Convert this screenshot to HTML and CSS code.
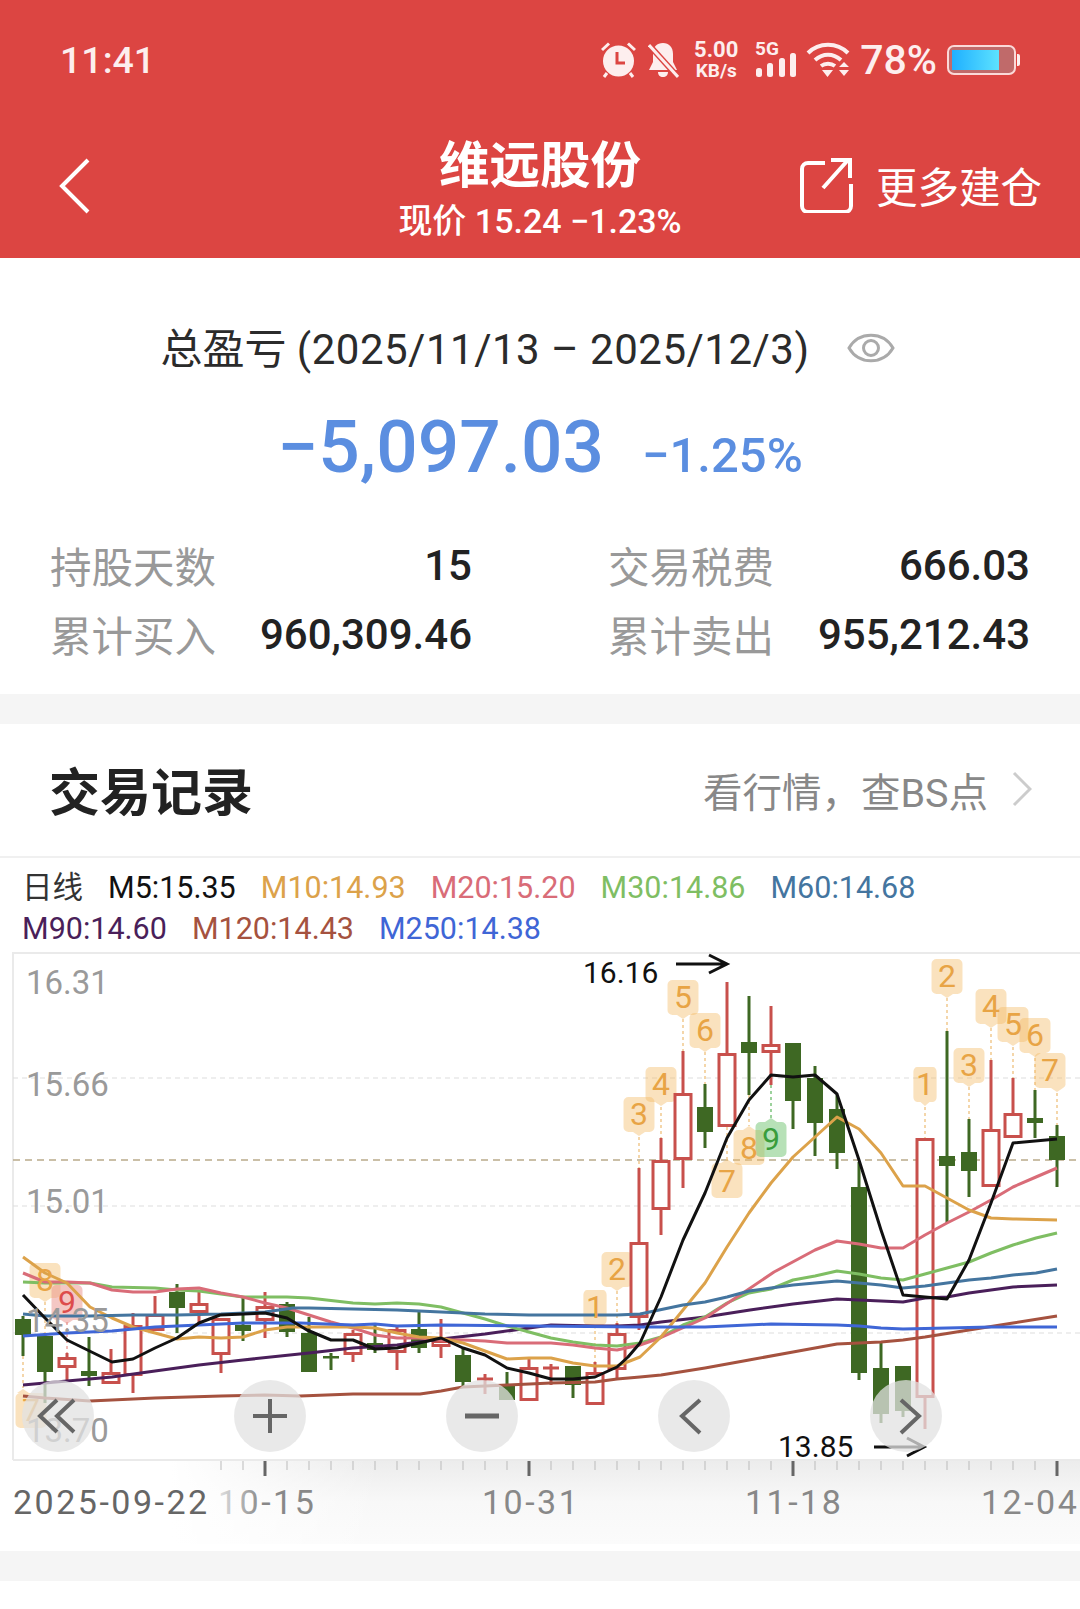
FILE: index.html
```html
<!DOCTYPE html>
<html lang="zh-CN">
<head>
    <meta charset="UTF-8">
    <meta name="viewport" content="width=device-width, initial-scale=1.0">
    <title>维远股份</title>
    <link rel="stylesheet" href="styles.css">
</head>
<body>
    <header class="top">
        <div class="status-bar">
            <span class="time">11:41</span>
            <div class="status-icons">
                <svg class="icon-alarm" width="35" height="36" viewBox="0 0 35 36">
                    <circle cx="17.5" cy="19" r="15.5" fill="#fdeeee"/>
                    <path d="M1 8 8 1.500M34 8 27 1.500M6 31l-3 4M29 31l3 4" stroke="#fdeeee" stroke-width="3" fill="none"/>
                    <path d="M16 10v11h8" stroke="#dc4542" stroke-width="3" fill="none"/>
                </svg>
                <svg class="icon-bell" width="31" height="36" viewBox="0 0 31 36">
                    <path d="M15 1c6 0 10 4 10 11v8l4 8H1l4-8v-9C5 5 9 1 15 1ZM10 30h10c0 3-2 5-5 5s-5-2-5-5Z" fill="#fdeeee"/>
                    <path d="M1 3 30 35" stroke="#dc4542" stroke-width="6"/>
                    <path d="M1 3 30 35" stroke="#fdeeee" stroke-width="3"/>
                </svg>
                <div class="net-speed"><span>5.00</span><span class="net-unit">KB/s</span></div>
                <svg class="icon-signal" width="42" height="42" viewBox="0 -6 42 42">
                    <text class="signal-label" x="0" y="13">5G</text>
                    <rect x="1" y="26" width="6" height="9" rx="2.5"/>
                    <rect x="12" y="21" width="6" height="14" rx="2.5"/>
                    <rect x="24" y="16" width="6" height="19" rx="2.5"/>
                    <rect x="35" y="11" width="6" height="24" rx="2.5"/>
                </svg>
                <svg class="icon-wifi" width="44" height="36" viewBox="0 0 44 36">
                    <path d="M2 11C13 0 31 0 42 11M9 18c8-7 18-7 26 0M15 24c4-3 10-3 14 0" stroke="#fdeeee" stroke-width="4" fill="none"/>
                    <path d="M16 28h11l-5.500 7ZM33 25l5-5 5 5ZM33 28h10l-5 6Z" fill="#fdeeee"/>
                </svg>
                <span class="battery-level">78%</span>
                <div class="battery"><div class="battery-fill"></div></div>
            </div>
        </div>
        <nav class="nav">
            <svg class="nav-back" width="32" height="56" viewBox="0 0 32 56">
                <path d="M29 2 3 28l26 26" stroke="#fff" stroke-width="4" fill="none"/>
            </svg>
            <div class="nav-title">
                <h1>维远股份</h1>
                <p>现价 15.24 −1.23%</p>
            </div>
            <div class="nav-action">
                <svg width="54" height="56" viewBox="0 0 54 56">
                    <path d="M26 6H9a6 6 0 0 0-6 6v37a6 6 0 0 0 6 6h37a6 6 0 0 0 6-6V27" stroke="#fff" stroke-width="4" fill="none"/>
                    <path d="M24 31 49 3M32 3h19v18" stroke="#fff" stroke-width="4" fill="none"/>
                </svg>
                <span>更多建仓</span>
            </div>
        </nav>
    </header>

    <section class="summary">
        <div class="summary-label">
            <span class="summary-text">总盈亏 <span class="summary-range">(2025/11/13 – 2025/12/3)</span></span>
            <svg width="48" height="32" viewBox="0 0 48 32">
                <path d="M2 16C12 -1 36 -1 46 16 36 33 12 33 2 16Z" stroke="#aaa" stroke-width="3" fill="none"/>
                <circle cx="24" cy="16" r="7.500" stroke="#aaa" stroke-width="3" fill="none"/>
            </svg>
        </div>
        <div class="summary-total">
            <span class="total-amount">−5,097.03</span>
            <span class="total-rate">−1.25%</span>
        </div>
        <dl class="stats">
            <div class="stat"><dt>持股天数</dt><dd>15</dd></div>
            <div class="stat"><dt>交易税费</dt><dd>666.03</dd></div>
            <div class="stat"><dt>累计买入</dt><dd>960,309.46</dd></div>
            <div class="stat"><dt>累计卖出</dt><dd>955,212.43</dd></div>
        </dl>
    </section>

    <div class="band"></div>

    <section class="records">
        <div class="records-head">
            <h2>交易记录</h2>
            <div class="records-link">
                <span>看行情，查BS点</span>
                <svg width="20" height="36" viewBox="0 0 20 36">
                    <path d="M2 2 18 18 2 34" stroke="#ccc" stroke-width="3" fill="none"/>
                </svg>
            </div>
        </div>

        <div class="legend">
            <span class="legend-period">日线</span>
            <span class="ma5">M5:15.35</span>
            <span class="ma10">M10:14.93</span>
            <span class="ma20">M20:15.20</span>
            <span class="ma30">M30:14.86</span>
            <span class="ma60">M60:14.68</span>
            <span class="ma90">M90:14.60</span>
            <span class="ma120">M120:14.43</span>
            <span class="ma250">M250:14.38</span>
        </div>

        <div class="chart">
            <svg class="chart-svg" width="1080" height="598" viewBox="0 946 1080 598">
                <defs>
                    <linearGradient id="axisShade" x1="0" y1="0" x2="0" y2="1">
                        <stop offset="0" stop-color="#ececec"/>
                        <stop offset="0.5" stop-color="#f8f8f8"/>
                        <stop offset="1" stop-color="#fbfbfb"/>
                    </linearGradient>
                    <linearGradient id="axisFade" x1="0" y1="0" x2="1" y2="0">
                        <stop offset="0" stop-color="#fff"/>
                        <stop offset="0.45" stop-color="#fff"/>
                        <stop offset="1" stop-color="#fff" stop-opacity="0"/>
                    </linearGradient>
                    <linearGradient id="labelFade" gradientUnits="userSpaceOnUse" x1="220" y1="0" x2="262" y2="0">
                        <stop offset="0" stop-color="#ddd"/>
                        <stop offset="1" stop-color="#888"/>
                    </linearGradient>
                    <path id="tipDown" d="M-10.500 0H10.500A5 5 0 0 1 15.500 5V30A5 5 0 0 1 10.500 35H6L0 39L-6 35H-10.500A5 5 0 0 1-15.500 30V5A5 5 0 0 1-10.500 0Z"/>
                    <path id="tipUp" d="M-10.500 0H-6L0-4 6 0H10.500A5 5 0 0 1 15.500 5V30A5 5 0 0 1 10.500 35H-10.500A5 5 0 0 1-15.500 30V5A5 5 0 0 1-10.500 0Z"/>
                    <path id="tipDownRight" d="M-10.500 0H10.500A5 5 0 0 1 15.500 5V30A5 5 0 0 1 13 35L7 39L1 35H-10.500A5 5 0 0 1-15.500 30V5A5 5 0 0 1-10.500 0Z"/>
                    <path id="tipUpLeft" d="M-10.500 0H-14L-8-4 -2 0H10.500A5 5 0 0 1 15.500 5V30A5 5 0 0 1 10.500 35H-10.500A5 5 0 0 1-15.500 30V5A5 5 0 0 1-10.500 0Z"/>
                </defs>

                <!-- axis strip -->
                <rect x="0" y="1460" width="1080" height="84" fill="url(#axisShade)"/>
                <rect x="0" y="1460" width="380" height="84" fill="url(#axisFade)"/>

                <!-- frame and price lines -->
                <path class="frame" d="M13 1460V953H1080M13 1460H1080"/>
                <path class="grid" d="M13 1078H1080M13 1206H1080M13 1333H1080"/>
                <path class="last-price" d="M13 1160H1080"/>

                <!-- marker stems -->
                <path class="stem" d="M595 1331V1372M617 1291V1323M639 1137V1168M661 1107V1138M683 1019V1051M705 1052V1084M727 1127V1160M749 1095V1126M925 1107V1138M947 998V1031M969 1087V1119M991 1028V1060M1013 1047V1078M1035 1058V1090M1057 1093V1125M45 1302V1333M23 1356V1388"/>
                <path class="stem stem-red" d="M67 1322V1353"/>
                <path class="stem stem-green" d="M771 1085V1118"/>

                <!-- markers -->
                <g class="marks">
                    <use href="#tipDown" transform="translate(595 1290) scale(.75 1)"/>
                    <use href="#tipDown" transform="translate(617 1252)"/>
                    <use href="#tipDown" transform="translate(639 1097)"/>
                    <use href="#tipDown" transform="translate(661 1067)"/>
                    <use href="#tipDown" transform="translate(683 980)"/>
                    <use href="#tipDown" transform="translate(705 1013)"/>
                    <use href="#tipUp" transform="translate(727 1163)"/>
                    <use href="#tipUp" transform="translate(749 1130)"/>
                    <use href="#tipDown" transform="translate(925 1067) scale(.75 1)"/>
                    <use href="#tipDown" transform="translate(947 959)"/>
                    <use href="#tipDown" transform="translate(969 1048)"/>
                    <use href="#tipDown" transform="translate(991 989)"/>
                    <use href="#tipDown" transform="translate(1013 1007)"/>
                    <use href="#tipDown" transform="translate(1035 1018)"/>
                    <use href="#tipDownRight" transform="translate(1050 1053)"/>
                    <use href="#tipDown" transform="translate(45 1263)"/>
                    <use href="#tipUpLeft" transform="translate(31 1393)"/>
                </g>
                <use class="mark-red" href="#tipDown" transform="translate(67 1285)"/>
                <use class="mark-green" href="#tipUp" transform="translate(771 1122)"/>

                <!-- candles -->
                <path class="wick-green" d="M23 1316V1356M45 1333V1403M89 1337V1386M177 1284V1333M243 1298V1341M287 1302V1337M309 1317V1372M331 1353V1370M375 1323V1353M419 1312V1353M463 1348V1388M507 1372V1400M573 1366V1398M705 1084V1148M749 996V1095M793 1043V1129M815 1066V1156M837 1095V1169M859 1162V1380M881 1343V1423M903 1366V1417M947 1031V1223M969 1119V1197M1035 1090V1138M1057 1125V1187"/>
                <path class="wick-red" d="M67 1353V1380M111 1349V1384M133 1313V1393M155 1296V1331M199 1292V1323M221 1318V1373M265 1292V1338M353 1330V1362M397 1327V1370M441 1319V1358M485 1374V1394M529 1357V1401M551 1364V1385M595 1362V1405M617 1323V1378M639 1168V1330M661 1138V1235M683 1051V1188M727 982V1127M771 1006V1085M925 1138V1429M991 1060V1187M1013 1078V1138"/>
                <g class="body-green">
                    <rect x="15" y="1319" width="16" height="16"/>
                    <rect x="37" y="1336" width="16" height="36"/>
                    <rect x="81" y="1371" width="16" height="5"/>
                    <rect x="169" y="1292" width="16" height="16"/>
                    <rect x="235" y="1325" width="16" height="6"/>
                    <rect x="279" y="1304" width="16" height="28"/>
                    <rect x="301" y="1333" width="16" height="39"/>
                    <rect x="323" y="1356" width="16" height="2.500"/>
                    <rect x="367" y="1343" width="16" height="7"/>
                    <rect x="411" y="1329" width="16" height="19"/>
                    <rect x="455" y="1355" width="16" height="27"/>
                    <rect x="499" y="1385" width="16" height="15"/>
                    <rect x="565" y="1366" width="16" height="19"/>
                    <rect x="697" y="1107" width="16" height="25"/>
                    <rect x="741" y="1042" width="16" height="11"/>
                    <rect x="785" y="1043" width="16" height="58"/>
                    <rect x="807" y="1078" width="16" height="45"/>
                    <rect x="829" y="1109" width="16" height="44"/>
                    <rect x="851" y="1187" width="16" height="186"/>
                    <rect x="873" y="1368" width="16" height="46"/>
                    <rect x="895" y="1366" width="16" height="45"/>
                    <rect x="939" y="1156" width="16" height="10"/>
                    <rect x="961" y="1152" width="16" height="19"/>
                    <rect x="1027" y="1118" width="16" height="5"/>
                    <rect x="1049" y="1136" width="16" height="24"/>
                </g>
                <g class="body-red">
                    <rect x="59" y="1358.500" width="16" height="8"/>
                    <rect x="103" y="1373.500" width="16" height="9"/>
                    <rect x="125" y="1326.500" width="16" height="48"/>
                    <rect x="147" y="1315.500" width="16" height="14"/>
                    <rect x="191" y="1304.500" width="16" height="7"/>
                    <rect x="213" y="1319.500" width="16" height="34"/>
                    <rect x="257" y="1307.500" width="16" height="12"/>
                    <rect x="345" y="1334.500" width="16" height="19"/>
                    <rect x="389" y="1330.500" width="16" height="21"/>
                    <rect x="433" y="1341.500" width="16" height="4"/>
                    <rect x="521" y="1368.500" width="16" height="31"/>
                    <rect x="587" y="1373.500" width="16" height="30"/>
                    <rect x="609" y="1334.500" width="16" height="34"/>
                    <rect x="631" y="1243.500" width="16" height="73"/>
                    <rect x="653" y="1161.500" width="16" height="47"/>
                    <rect x="675" y="1094.500" width="16" height="64"/>
                    <rect x="719" y="1054.500" width="16" height="71"/>
                    <rect x="763" y="1045.500" width="16" height="6"/>
                    <rect x="917" y="1139.500" width="16" height="257"/>
                    <rect x="983" y="1130.500" width="16" height="55"/>
                    <rect x="1005" y="1114.500" width="16" height="22"/>
                </g>
                <path class="cross-red" d="M477 1379H493M543 1368H559"/>

                <!-- moving averages -->
                <path class="ma ma-120-line" d="M23 1396L45 1398L90 1401L155 1398L221 1396L265 1395L300 1396L353 1394L420 1394L441 1391L463 1387L507 1385L551 1383L595 1382L617 1379L640 1377L661 1375L705 1368L749 1360L793 1352L837 1344L881 1342L903 1340L925 1337L969 1330L1013 1323L1057 1316"/>
                <path class="ma ma-90-line" d="M23 1385L67 1381L112 1377L155 1371L199 1365L243 1360L309 1353L353 1348L397 1345L441 1339L485 1334L529 1328L551 1325L595 1326L617 1326L640 1325L661 1322L705 1317L750 1310L793 1304L837 1299L881 1301L903 1302L925 1298L947 1297L969 1293L1013 1287L1057 1285"/>
                <path class="ma ma-30-line" d="M23 1282L45 1283L90 1283L112 1287L155 1288L177 1290L199 1291L221 1294L243 1297L287 1297L309 1298L353 1303L375 1304L397 1303L419 1304L441 1307L463 1313L485 1319L507 1326L529 1332L551 1338L573 1342L595 1345L617 1346L640 1343L661 1337L683 1325L705 1317L727 1303L749 1293L771 1289L793 1280L815 1276L837 1271L859 1274L881 1278L903 1280L925 1274L947 1268L969 1262L991 1253L1013 1245L1036 1238L1057 1233"/>
                <path class="ma ma-20-line" d="M23 1273L45 1282L67 1282L90 1283L112 1290L133 1292L155 1292L177 1289L199 1288L221 1293L243 1297L265 1303L287 1308L309 1315L331 1322L353 1328L375 1335L397 1338L419 1338L441 1340L463 1340L485 1341L507 1343L551 1343L573 1345L595 1348L617 1350L640 1345L660 1338L705 1318L740 1295L774 1272L815 1250L837 1241L859 1244L881 1248L903 1248L925 1235L947 1223L969 1212L991 1200L1013 1187L1036 1177L1057 1168"/>
                <path class="ma ma-10-line" d="M23 1257L45 1273L67 1283L90 1307L112 1318L133 1327L155 1333L177 1339L199 1337L221 1338L243 1337L265 1330L287 1327L309 1327L353 1327L375 1328L397 1333L419 1337L441 1338L463 1343L485 1351L507 1359L529 1358L551 1358L573 1363L595 1366L617 1366L640 1357L661 1337L683 1310L705 1283L727 1247L749 1213L771 1183L793 1157L815 1137L837 1117L859 1129L881 1153L903 1186L925 1186L947 1198L969 1210L991 1218L1013 1219L1057 1220"/>
                <path class="ma ma-60-line" d="M23 1314L45 1316L90 1316L133 1315L177 1315L221 1314L265 1312L293 1308L309 1308L353 1309L397 1310L441 1312L485 1314L529 1315L595 1315L617 1315L640 1314L683 1305L705 1302L727 1297L749 1291L771 1288L793 1285L815 1283L837 1281L859 1283L881 1285L903 1288L925 1286L947 1283L969 1280L991 1278L1013 1275L1036 1273L1057 1269"/>
                <path class="ma ma-250-line" d="M23 1336L67 1333L112 1331L155 1327L199 1325L243 1323L300 1323L353 1325L375 1324L397 1326L441 1325L640 1327L705 1327L771 1324L837 1325L859 1326L881 1328L903 1329L947 1328L991 1327L1057 1327"/>
                <path class="ma ma-5-line" d="M23 1295L45 1318L67 1340L112 1362L133 1359L155 1348L177 1338L199 1323L220 1315L265 1313L287 1318L307 1330L331 1340L353 1340L375 1349L397 1348L419 1343L441 1338L463 1348L485 1355L507 1368L529 1373L551 1379L573 1379L595 1377L617 1367L628 1357L640 1343L661 1297L683 1240L705 1193L727 1138L749 1100L771 1075L793 1077L815 1075L837 1094L859 1160L881 1230L903 1295L925 1297L947 1299L969 1260L991 1203L1013 1143L1057 1139"/>

                <!-- marker digits -->
                <g class="mark-text">
                    <text x="595" y="1318">1</text>
                    <text x="617" y="1280">2</text>
                    <text x="639" y="1125">3</text>
                    <text x="661" y="1095">4</text>
                    <text x="683" y="1008">5</text>
                    <text x="705" y="1041">6</text>
                    <text x="727" y="1192">7</text>
                    <text x="749" y="1159">8</text>
                    <text x="925" y="1095">1</text>
                    <text x="947" y="987">2</text>
                    <text x="969" y="1076">3</text>
                    <text x="991" y="1017">4</text>
                    <text x="1013" y="1035">5</text>
                    <text x="1035" y="1046">6</text>
                    <text x="1050" y="1081">7</text>
                    <text x="45" y="1291">8</text>
                    <text x="31" y="1421">7</text>
                </g>
                <text class="mark-text mark-text-red" x="67" y="1313">9</text>
                <text class="mark-text mark-text-green" x="771" y="1150">9</text>

                <!-- price scale -->
                <g class="price-label">
                    <text x="26" y="994">16.31</text>
                    <text x="26" y="1096">15.66</text>
                    <text x="26" y="1213">15.01</text>
                    <text x="26" y="1332">14.35</text>
                    <text x="26" y="1442">13.70</text>
                </g>

                <!-- high and low -->
                <text class="extreme" x="583" y="983">16.16</text>
                <path class="extreme-arrow" d="M676 964H727M709 955 727 964 709 973"/>
                <text class="extreme" x="778" y="1457">13.85</text>
                <path class="extreme-arrow" d="M874 1447H924M907 1438 924 1447 907 1456"/>

                <!-- time axis -->
                <path class="tick" d="M221 1461V1470M243 1461V1470M287 1461V1470M309 1461V1470M331 1461V1470M353 1461V1470M375 1461V1470M397 1461V1470M419 1461V1470M441 1461V1470M463 1461V1470M485 1461V1470M507 1461V1470M551 1461V1470M573 1461V1470M595 1461V1470M617 1461V1470M639 1461V1470M661 1461V1470M683 1461V1470M705 1461V1470M727 1461V1470M749 1461V1470M771 1461V1470M815 1461V1470M837 1461V1470M859 1461V1470M881 1461V1470M903 1461V1470M925 1461V1470M947 1461V1470M969 1461V1470M991 1461V1470M1013 1461V1470M1035 1461V1470"/>
                <path class="tick-major" d="M265 1461V1476M529 1461V1476M793 1461V1476M1057 1461V1476"/>
                <g class="date-label">
                    <text class="date-first" x="13" y="1514">2025-09-22</text>
                    <text class="date-faded" x="218" y="1514">10-15</text>
                    <text x="482" y="1514">10-31</text>
                    <text x="745" y="1514">11-18</text>
                    <text x="981" y="1514">12-04</text>
                </g>
            </svg>

            <div class="chart-buttons">
                <div class="chart-button">
                    <svg width="72" height="72" viewBox="0 0 72 72"><path d="M35 20 18 36l17 16M52 20 35 36l17 16"/></svg>
                </div>
                <div class="chart-button">
                    <svg width="72" height="72" viewBox="0 0 72 72"><path d="M19 36H53M36 19V53"/></svg>
                </div>
                <div class="chart-button">
                    <svg width="72" height="72" viewBox="0 0 72 72"><path class="thick" d="M19 36H53"/></svg>
                </div>
                <div class="chart-button">
                    <svg width="72" height="72" viewBox="0 0 72 72"><path d="M42 20 24 36l18 17"/></svg>
                </div>
                <div class="chart-button">
                    <svg width="72" height="72" viewBox="0 0 72 72"><path d="M31 20 49 36 31 53"/></svg>
                </div>
            </div>
        </div>
    </section>

    <div class="band band-bottom"></div>
</body>
</html>
```

FILE: styles.css
```css
* {
    box-sizing: border-box;
}

body {
    margin: 0;
    width: 1080px;
    height: 1609px;
    overflow: hidden;
    background-color: #fff;
    font-family: Roboto, "Noto Sans CJK SC", sans-serif;
    color: #222;
}

h1, h2, p, dl, dd {
    margin: 0;
}

/* red header */
.top {
    height: 258px;
    background-color: #dc4542;
    color: #fff;
}

.status-bar {
    height: 120px;
    padding: 0 64px 0 60px;
    display: flex;
    align-items: center;
    justify-content: space-between;
}

.time {
    font-size: 37.500px;
    font-weight: 500;
    color: #fdeeee;
}

.status-icons {
    display: flex;
    align-items: center;
}

.icon-bell {
    margin-left: 12px;
}

.net-speed {
    margin-left: 14px;
    width: 46px;
    display: flex;
    flex-direction: column;
    align-items: center;
    font-size: 22px;
    line-height: 21px;
    font-weight: 700;
    color: #fdeeee;
}

.net-unit {
    font-size: 19px;
}

.icon-signal {
    margin: -6px 0 0 16px;
}

.icon-signal rect {
    fill: #fdeeee;
}

.signal-label {
    font-size: 19px;
    font-weight: 700;
    fill: #fdeeee;
}

.icon-wifi {
    margin-left: 9px;
}

.battery-level {
    margin-left: 10px;
    font-size: 41px;
    font-weight: 500;
    color: #fdeeee;
}

.battery {
    position: relative;
    margin-left: 10px;
    width: 69px;
    height: 30px;
    padding: 3px;
    border: 2px solid #fbd9d8;
    border-radius: 7px;
    background-color: #c06a6a;
}

.battery::after {
    content: "";
    position: absolute;
    right: -6px;
    top: 7px;
    width: 3px;
    height: 12px;
    border-radius: 0 2px 2px 0;
    background-color: #fdeeee;
}

.battery-fill {
    width: 47px;
    height: 100%;
    background: linear-gradient(to right, #1fb0ff, #5de2ff);
}

.nav {
    height: 138px;
    padding: 0 38px;
    display: grid;
    grid-template-columns: 1fr auto 1fr;
    align-items: center;
}

.nav-back {
    margin: 0 0 6px 21px;
}

.nav-title {
    text-align: center;
}

.nav-title h1 {
    font-size: 50.500px;
    line-height: 62px;
    font-weight: 700;
}

.nav-title p {
    margin-top: 2px;
    font-size: 34px;
    line-height: 44px;
    font-weight: 500;
}

.nav-action {
    justify-self: end;
    display: flex;
    align-items: center;
    gap: 23px;
    padding-bottom: 8px;
    font-size: 41.500px;
}

/* totals */
.summary {
    height: 436px;
    padding: 58px 50px 0;
}

.summary-label {
    height: 64px;
    padding-right: 25px;
    display: flex;
    align-items: center;
    justify-content: center;
    gap: 37px;
    font-size: 42px;
    color: #2b2b2b;
}

.summary-text {
    margin-bottom: 6px;
}

.summary-range {
    letter-spacing: 0.5px;
}

.summary-total {
    margin-top: 24px;
    height: 84px;
    display: flex;
    align-items: baseline;
    justify-content: center;
    gap: 38px;
    color: #5b8ee0;
}

.total-amount {
    font-size: 73px;
    font-weight: 500;
}

.total-rate {
    font-size: 49px;
    font-weight: 500;
}

.stats {
    margin-top: 49px;
    display: grid;
    grid-template-columns: 422px 422px;
    column-gap: 136px;
    row-gap: 13px;
}

.stat {
    height: 56px;
    display: flex;
    align-items: center;
    justify-content: space-between;
}

.stat dt {
    font-size: 41.500px;
    color: #999;
}

.stat dd {
    font-size: 42px;
    font-weight: 500;
    color: #222;
}

.band {
    height: 30px;
    background-color: #f5f5f5;
}

/* records */
.records-head {
    height: 134px;
    padding: 0 48px 2px 49px;
    border-bottom: 2px solid #f0f0f0;
    display: flex;
    align-items: center;
    justify-content: space-between;
}

.records-head h2 {
    font-size: 51px;
    font-weight: 700;
}

.records-link {
    display: flex;
    align-items: center;
    gap: 24px;
    font-size: 39.500px;
    color: #888;
}

.legend {
    height: 88px;
    padding: 9px 130px 0 22px;
    display: flex;
    flex-wrap: wrap;
    align-content: flex-start;
    column-gap: 25px;
    font-size: 30.500px;
    line-height: 41px;
}

.legend-period { color: #333; }
.ma5 { color: #111; }
.ma10 { color: #dca24a; }
.ma20 { color: #d96c78; }
.ma30 { color: #7fbe63; }
.ma60 { color: #44759f; }
.ma90 { color: #4a1f5a; }
.ma120 { color: #a5523f; }
.ma250 { color: #3f66d6; }

/* chart */
.chart {
    position: relative;
    height: 598px;
}

.chart-svg {
    display: block;
}

.frame {
    fill: none;
    stroke: #eaeaea;
    stroke-width: 2;
}

.grid {
    fill: none;
    stroke: #ddd;
    stroke-width: 1;
    stroke-dasharray: 5 4;
}

.last-price {
    fill: none;
    stroke: #b9ab8a;
    stroke-width: 1.500;
    stroke-dasharray: 7 5;
}

.stem {
    fill: none;
    stroke: #f1c98f;
    stroke-width: 1.500;
    stroke-dasharray: 3 3;
}

.stem-red {
    stroke: #eda5a0;
}

.stem-green {
    stroke: #7cc47c;
}

.marks {
    fill: #f4b964;
    fill-opacity: 0.42;
}

.mark-red {
    fill: #ea8f8a;
    fill-opacity: 0.5;
}

.mark-green {
    fill: #6fc470;
    fill-opacity: 0.5;
}

.wick-green,
.wick-red {
    fill: none;
    stroke-width: 3;
}

.wick-green {
    stroke: #3e6823;
}

.wick-red,
.cross-red {
    stroke: #c8504c;
}

.cross-red {
    fill: none;
    stroke-width: 3;
}

.body-green {
    fill: #3e6823;
}

.body-red {
    fill: #fff;
    stroke: #c8504c;
    stroke-width: 3;
}

.ma {
    fill: none;
    stroke-width: 3;
    stroke-linejoin: round;
}

.ma-5-line { stroke: #111; }
.ma-10-line { stroke: #dca24a; }
.ma-20-line { stroke: #d96c78; }
.ma-30-line { stroke: #7fbe63; }
.ma-60-line { stroke: #44759f; }
.ma-90-line { stroke: #4a1f5a; }
.ma-120-line { stroke: #a5523f; }
.ma-250-line { stroke: #3f66d6; }

.mark-text {
    font-size: 32px;
    text-anchor: middle;
    fill: #e8a445;
}

.mark-text-red {
    fill: #dd4c4c;
}

.mark-text-green {
    fill: #3a9d3c;
}

.price-label {
    font-size: 33px;
    fill: #9a9a9a;
}

.extreme {
    font-size: 30px;
    fill: #111;
}

.extreme-arrow {
    fill: none;
    stroke: #111;
    stroke-width: 3;
}

.tick {
    fill: none;
    stroke: #bbb;
    stroke-width: 1;
}

.tick-major {
    fill: none;
    stroke: #666;
    stroke-width: 3;
}

.date-label {
    font-size: 34px;
    letter-spacing: 2.500px;
    fill: #888;
}

.date-first {
    fill: #666;
}

.date-faded {
    fill: url(#labelFade);
}

.chart-buttons {
    position: absolute;
    left: 22px;
    top: 434px;
    display: flex;
    gap: 140px;
}

.chart-button {
    width: 72px;
    height: 72px;
    border-radius: 50%;
    background-color: rgba(225, 225, 225, 0.75);
}

.chart-button svg {
    display: block;
    fill: none;
    stroke: #666;
    stroke-width: 4;
}

.chart-button .thick {
    stroke-width: 5;
}

.band-bottom {
    margin-top: 7px;
}
```
